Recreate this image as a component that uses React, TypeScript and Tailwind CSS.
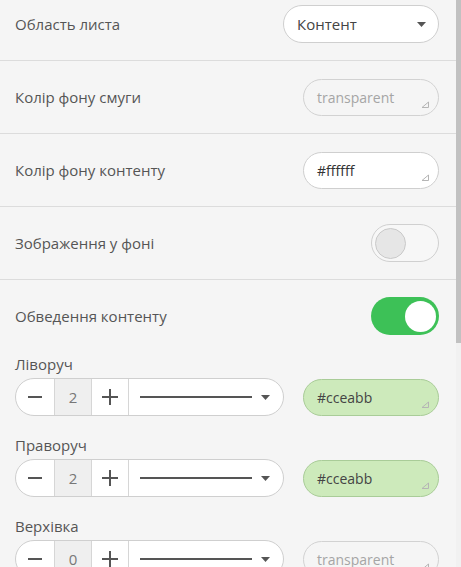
import React from "react";

const font = { fontFamily: '"Open Sans", "Noto Sans", sans-serif' };

function Handle() {
  return (
    <svg className="absolute right-[8px] bottom-[7px]" width="9" height="7" viewBox="0 0 9 7">
      <path d="M1 6.5 L7.5 6.5 L7.5 1 Z" fill="none" stroke="#b5b5b5" strokeWidth="1" strokeLinejoin="round" />
    </svg>
  );
}

function ColorInput({ value, variant }: { value: string; variant: "empty" | "white" | "green" }) {
  const cls =
    variant === "green"
      ? "bg-[#cdeabb] border-[#a9cc98] text-[#444]"
      : variant === "white"
      ? "bg-white border-[#cfcfcf] text-[#333]"
      : "bg-transparent border-[#d2d2d2] text-[#a5a5a5]";
  return (
    <div className={`relative shrink-0 w-[136px] h-[37px] rounded-full border ${cls} flex items-center pl-[13px] text-[14px]`}>
      {value}
      <Handle />
    </div>
  );
}

function Toggle({ on }: { on: boolean }) {
  return on ? (
    <div className="shrink-0 w-[68px] h-[38px] rounded-full bg-[#3dc157] flex items-center justify-end pr-[3px]">
      <div className="w-[31px] h-[31px] rounded-full bg-white" />
    </div>
  ) : (
    <div className="shrink-0 w-[68px] h-[38px] rounded-full border border-[#d0d0d0] bg-[#f7f7f7] flex items-center pl-[3px]">
      <div className="w-[31px] h-[31px] rounded-full bg-[#e6e6e6] border border-[#c9c9c9]" />
    </div>
  );
}

function Caret() {
  return (
    <svg width="9" height="5" viewBox="0 0 9 5">
      <path d="M0 0 L9 0 L4.5 5 Z" fill="#555" />
    </svg>
  );
}

function Stepper({ value }: { value: string }) {
  return (
    <div className="flex shrink-0 w-[269px] h-[38px] rounded-full border border-[#cfcfcf] bg-white overflow-hidden">
      <div className="w-[38px] flex items-center justify-center">
        <div className="w-[14px] h-[2px] bg-[#555]" />
      </div>
      <div className="w-[38px] flex items-center justify-center bg-[#efefef] border-x border-[#d6d6d6] text-[15px] text-[#777]">
        {value}
      </div>
      <div className="w-[36px] flex items-center justify-center relative">
        <div className="w-[16px] h-[2px] bg-[#555]" />
        <div className="absolute w-[2px] h-[16px] bg-[#555]" />
      </div>
      <div className="flex-1 border-l border-[#d6d6d6] flex items-center pl-[11px] pr-[13px] gap-[9px]">
        <div className="flex-1 h-[2px] bg-[#555]" />
        <Caret />
      </div>
    </div>
  );
}

function Row({ label, children }: { label: string; children: React.ReactNode }) {
  return (
    <div className="shrink-0 flex items-center justify-between pl-[15px] pr-[17px] h-[73px] border-b border-[#dcdcdc]">
      <span className="text-[15px] text-[#555]">{label}</span>
      {children}
    </div>
  );
}

function BorderRow({ label, value, color, variant }: { label: string; value: string; color: string; variant: "empty" | "white" | "green" }) {
  return (
    <div className="shrink-0 flex flex-col pl-[15px] pr-[17px]">
      <span className="text-[15px] text-[#555] leading-[20px] mb-[4px]">{label}</span>
      <div className="flex items-center justify-between">
        <Stepper value={value} />
        <ColorInput value={color} variant={variant} />
      </div>
    </div>
  );
}

export default function App() {
  return (
    <div className="w-[461px] h-[567px] bg-[#f5f5f5] flex overflow-hidden" style={font}>
      <div className="flex-1 flex flex-col">
        <div className="shrink-0 flex items-start justify-between pl-[15px] pr-[17px] h-[61px] border-b border-[#dcdcdc] pt-[5px]">
          <span className="text-[15px] text-[#555] leading-[20px] mt-[9px]">Область листа</span>
          <div className="w-[156px] h-[38px] rounded-full border border-[#cfcfcf] bg-white flex items-center justify-between pl-[13px] pr-[12px] text-[15px] text-[#444]">
            Контент
            <Caret />
          </div>
        </div>
        <Row label="Колір фону смуги">
          <ColorInput value="transparent" variant="empty" />
        </Row>
        <Row label="Колір фону контенту">
          <ColorInput value="#ffffff" variant="white" />
        </Row>
        <Row label="Зображення у фоні">
          <Toggle on={false} />
        </Row>
        <div className="shrink-0 flex items-center justify-between pl-[15px] pr-[17px] pt-[17px] pb-[19px]">
          <span className="text-[15px] text-[#555]">Обведення контенту</span>
          <Toggle on={true} />
        </div>
        <div className="shrink-0 flex flex-col gap-[19px]">
          <BorderRow label="Ліворуч" value="2" color="#cceabb" variant="green" />
          <BorderRow label="Праворуч" value="2" color="#cceabb" variant="green" />
          <BorderRow label="Верхівка" value="0" color="transparent" variant="empty" />
        </div>
      </div>
      <div className="shrink-0 w-[5px] bg-[#f1f1f1] flex flex-col">
        <div className="h-[343px] bg-[#c1c1c1]" />
      </div>
    </div>
  );
}
